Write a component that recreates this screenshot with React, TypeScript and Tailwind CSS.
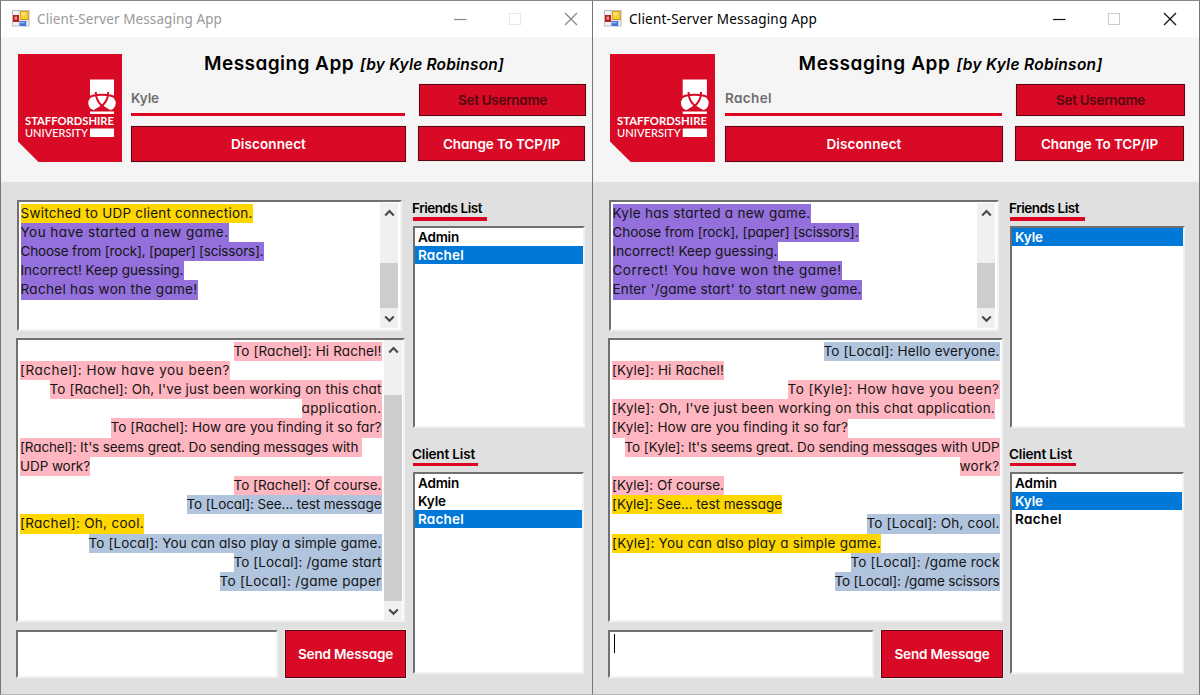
import { useLayoutEffect, useRef } from 'react';
import type { ReactNode } from 'react';
import clsx from 'clsx';

type FitProps = { text: string; width: number; className?: string };

/** One line of text whose tracking is adjusted so that it spans `width` pixels. */
function Fit({ text, width, className }: FitProps) {
  const ref = useRef<HTMLSpanElement>(null);
  useLayoutEffect(() => {
    const el = ref.current;
    if (!el) return;
    el.style.letterSpacing = '0px';
    const natural = el.getBoundingClientRect().width;
    el.style.letterSpacing = `${(width - natural) / text.length}px`;
  }, [text, width]);
  return (
    <span ref={ref} className={clsx('inline-block whitespace-pre', className)}>
      {text}
    </span>
  );
}

type Tone = 'gold' | 'purple' | 'pink' | 'blue';
const tones: Record<Tone, string> = {
  gold: 'bg-[#ffd700]',
  purple: 'bg-[#9370db]',
  pink: 'bg-[#ffb6c1]',
  blue: 'bg-[#b0c4de]',
};

type Line = { text: string; width: number; tone: Tone; right?: boolean };

function Lines({ lines, className }: { lines: Line[]; className: string }) {
  return (
    <div className={clsx('flex flex-col', className)}>
      {lines.map((l, i) => (
        <div key={i} className={clsx('flex h-[19.2px] shrink-0', l.right && 'justify-end')}>
          <Fit
            text={l.text}
            width={l.width}
            className={clsx('h-[19.3px] text-[13.5px] leading-[19px] text-[#151515]', tones[l.tone])}
          />
        </div>
      ))}
    </div>
  );
}

function Sunken({ className, children }: { className: string; children?: ReactNode }) {
  return (
    <div
      className={clsx(
        'shrink-0 border-2 border-t-[#707070] border-r-[#f2f2f2] border-b-[#f2f2f2] border-l-[#707070] bg-white',
        className,
      )}
    >
      {children}
    </div>
  );
}

function Chevron({ down }: { down?: boolean }) {
  return (
    <svg width="11" height="8" viewBox="0 0 11 8" fill="none" stroke="#484848" strokeWidth="2.1">
      <path d={down ? 'M1.2 1.4 5.5 5.8 9.8 1.4' : 'M1.2 6.4 5.5 2 9.8 6.4'} />
    </svg>
  );
}

function ScrollBar({ className, before, thumb }: { className: string; before: string; thumb: string }) {
  return (
    <div className={clsx('flex w-[18px] shrink-0 flex-col items-center bg-[#f0f0f0]', className)}>
      <div className={clsx('flex shrink-0 justify-center', before)}>
        <Chevron />
      </div>
      <div className={clsx('w-full shrink-0 bg-[#cdcdcd]', thumb)} />
      <div className="mt-[7px]">
        <Chevron down />
      </div>
    </div>
  );
}

function RedButton({ text, width, className, muted }: FitProps & { muted?: boolean }) {
  return (
    <button
      className={clsx(
        'flex shrink-0 items-center justify-center border border-[#5a0712] bg-[#d90a25] outline outline-[#ececec]',
        className,
      )}
    >
      <Fit
        text={text}
        width={width}
        className={clsx('text-[13.5px] leading-[18px] font-semibold', muted ? 'text-[#520813]' : 'text-white')}
      />
    </button>
  );
}

function AppIcon() {
  return (
    <svg width="18" height="17" viewBox="0 0 18 17">
      <rect x=".5" y=".5" width="16.5" height="15.5" fill="#f4f4f5" stroke="#b9bbc0" />
      <path d="M7 1v15M1 11h16" stroke="#c9cbd0" />
      <rect x="1" y="5" width="6" height="7" fill="#bd1c18" />
      <rect x="2.6" y="6.6" width="2.4" height="3" fill="#f0a090" />
      <rect x="8.2" y="1" width="8.6" height="9" fill="#d99a0b" />
      <rect x="9" y="1.7" width="6.8" height="7.2" fill="#f8cf3b" />
      <rect x="10" y="2.6" width="3" height="3" fill="#fde88a" />
      <rect x="7.6" y="11" width="6.6" height="5" fill="#3f74d8" />
      <rect x="8.4" y="11.8" width="4.4" height="1.6" fill="#8fb7f8" />
    </svg>
  );
}

function Logo({ className }: { className: string }) {
  return (
    <svg className={clsx('shrink-0', className)} viewBox="0 0 104 108" preserveAspectRatio="none">
      <path d="M0 0H104V108H20.500L0 87.500Z" fill="#d90a25" />
      <path d="M72 25.500H96V47H72Z" fill="#fff" />
      <ellipse cx="77.300" cy="49.300" rx="7" ry="7" fill="#fff" />
      <ellipse cx="90.700" cy="49.300" rx="7" ry="7" fill="#fff" />
      <path d="M78 42H90V49L84 55L78 49Z" fill="#fff" />
      <path
        d="M71 43.800C75 39.800 93 39.800 97 43.800M77.800 38C77.800 47.500 83.500 53 91.500 56.600M90.200 38C90.200 47.500 84.500 53 76.500 56.600"
        fill="none"
        stroke="#d90a25"
        strokeWidth="2"
      />
      <path d="M79 56.300 84 52.800 89 56.300Z" fill="#d90a25" />
      <path d="M72 57.500H96V60H72Z" fill="#fff" />
      <g fill="#fff" fontFamily="Lato, 'Open Sans', sans-serif" fontSize="11.600" fontWeight="700">
        <text x="7" y="71" textLength="89" lengthAdjust="spacingAndGlyphs">
          STAFFORDSHIRE
        </text>
        <text x="7" y="83" textLength="63" lengthAdjust="spacingAndGlyphs" fontWeight="500">
          UNIVERSITY
        </text>
      </g>
      <path d="M72 74.500H96V83H72Z" fill="#fff" />
    </svg>
  );
}

type Item = { text: string; width: number; selected?: boolean };
type ListProps = { title: string; titleWidth: number; underline: string; items: Item[]; box: string; pad: string };

function NameList({ title, titleWidth, underline, items, box, pad }: ListProps) {
  return (
    <section className="flex flex-col items-start">
      <Fit text={title} width={titleWidth} className="h-[17px] text-[13.5px] leading-[17px] font-semibold text-black" />
      <div className={clsx('ml-px h-[3.500px] bg-[#dc0420]', underline)} />
      <Sunken className={clsx('ml-px', box)}>
        {items.map((it) => (
          <div
            key={it.text}
            className={clsx('flex h-[18px] items-center', pad, it.selected ? 'bg-[#0078d7] text-white' : 'text-black')}
          >
            <Fit text={it.text} width={it.width} className="text-[13.5px] leading-[18px] font-semibold" />
          </div>
        ))}
      </Sunken>
    </section>
  );
}

type Sizes = {
  frame: string;
  titleBar: string;
  header: string;
  logo: string;
  headerMid: string;
  heading: string;
  rule: string;
  disconnect: string;
  headerRight: string;
  username: string;
  change: string;
  body: string;
  logBox: string;
  chatBox: string;
  chatLines: string;
  input: string;
  send: string;
  lists: string;
  friendsBox: string;
  clientBox: string;
  friendsRule: string;
  clientRule: string;
};

type WindowProps = {
  s: Sizes;
  active: boolean;
  user: string;
  userWidth: number;
  captionWidth: number;
  headingWidths: [number, number];
  log: Line[];
  chat: Line[];
  chatScrolls: boolean;
  friends: Item[];
  clients: Item[];
};

function MessagingWindow(p: WindowProps) {
  const { s } = p;
  return (
    <div className={clsx('flex h-[695px] shrink-0 flex-col border-t border-b border-l border-t-[#8a8a8a] border-b-[#b5b5b5] bg-[#e0e0e0]', s.frame)}>
      <div className={clsx('flex h-9 shrink-0 items-center justify-between bg-white', s.titleBar)}>
        <div className={clsx('flex items-center pb-px', p.active ? 'gap-[7px] text-black' : 'gap-[7px] text-[#999]')}>
          <AppIcon />
          <Fit text="Client-Server Messaging App" width={p.captionWidth} className="font-['Noto_Sans','Open_Sans',sans-serif] text-[13.5px] leading-5" />
        </div>
        <svg className="mb-px shrink-0" width="126" height="14" viewBox="0 0 126 14" fill="none" stroke={p.active ? '#111' : '#888'}>
          <path d="M1 7.500H13.500" strokeWidth="1.200" />
          <rect x="56.500" y="1.500" width="11" height="11" stroke={p.active ? '#ccc' : '#e6e6e6'} />
          <path d="M112 1 124 13M124 1 112 13" strokeWidth="1.300" />
        </svg>
      </div>

      <div className={clsx('flex h-[145px] shrink-0 bg-[#f5f5f5]', s.header)}>
        <Logo className={s.logo} />
        <div className={clsx('flex shrink-0 flex-col items-start', s.headerMid)}>
          <div className={clsx('flex h-[30px] items-baseline gap-[6px] whitespace-nowrap text-black', s.heading)}>
            <Fit text="Messaging App" width={p.headingWidths[0]} className="text-[19px] leading-[26px] font-semibold" />
            <Fit text="[by Kyle Robinson]" width={p.headingWidths[1]} className="text-[15.500px] leading-[26px] font-semibold italic" />
          </div>
          <Fit text={p.user} width={p.userWidth} className="mt-[8px] text-[13.500px] leading-[18px] font-semibold text-[#6d6d6d]" />
          <div className={clsx('mt-[5.500px] h-[3.500px] bg-[#dc0420]', s.rule)} />
          <RedButton text="Disconnect" width={75} className={clsx('mt-[10px] h-9', s.disconnect)} />
        </div>
        <div className={clsx('flex shrink-0 flex-col', s.headerRight)}>
          <RedButton text="Set Username" width={89} muted className={clsx('h-8', s.username)} />
          <RedButton text="Change To TCP/IP" width={117} className={clsx('mt-[10px] h-[35px]', s.change)} />
        </div>
      </div>

      <div className={clsx('flex grow', s.body)}>
        <div className="flex shrink-0 flex-col">
          <Sunken className={clsx('mt-[18px] ml-px flex h-[131px] justify-between', s.logBox)}>
            <Lines lines={p.log} className="mt-[1.700px] pl-[1.500px]" />
            <ScrollBar className="mt-[1px] mr-[2px] h-[125px]" before="h-[59.500px] pt-[6px]" thumb="h-[45px]" />
          </Sunken>
          <Sunken className={clsx('mt-[7px] flex h-[284px] overflow-hidden', s.chatBox)}>
            <Lines lines={p.chat} className={clsx('mt-[1.700px] grow pl-[2px]', s.chatLines)} />
            {p.chatScrolls && <ScrollBar className="mr-[1px] ml-[2.500px] h-[280px]" before="h-[54.500px] pt-[6px]" thumb="h-[206px]" />}
          </Sunken>
          <div className="mt-2 flex gap-[7px]">
            <Sunken className={clsx('h-12 pt-[2px] pl-[3.500px]', s.input)}>
              {p.active && <div className="h-[19px] w-[1.500px] bg-black" />}
            </Sunken>
            <RedButton text="Send Message" width={95} className={clsx('h-12', s.send)} />
          </div>
        </div>
        <div className={clsx('flex shrink-0 flex-col gap-[18px] pt-[18px]', s.lists)}>
          <NameList title="Friends List" titleWidth={70} underline={s.friendsRule} items={p.friends} box={clsx('mt-[5px] h-[202px]', s.friendsBox)} pad="pl-[3px]" />
          <NameList title="Client List" titleWidth={63} underline={s.clientRule} items={p.clients} box={clsx('mt-[6px] h-[202px]', s.clientBox)} pad="pl-[3px]" />
        </div>
      </div>
    </div>
  );
}

const leftSizes: Sizes = {
  frame: 'w-[592px] border-l-[#777]',
  titleBar: 'pl-[11px] pr-[13px]',
  header: 'pl-[17px]',
  logo: 'mt-[17px] h-[108px] w-[104px]',
  headerMid: 'ml-[9px] w-[275px] pt-[14px]',
  heading: 'pl-[73px]',
  rule: 'w-[274px]',
  disconnect: 'w-[275px]',
  headerRight: 'ml-[12px] pt-[47px]',
  username: 'ml-px w-[167px]',
  change: 'w-[167px]',
  body: 'pl-[15px]',
  logBox: 'w-[385px]',
  chatBox: 'w-[389px]',
  chatLines: '',
  input: 'w-[262px]',
  send: 'w-[121px]',
  lists: 'ml-[6px]',
  friendsBox: 'w-[172px]',
  clientBox: 'w-[171px]',
  friendsRule: 'w-[74px]',
  clientRule: 'w-[65px]',
};

const rightSizes: Sizes = {
  frame: 'w-[608px] border-r border-l-[#777] border-r-[#777]',
  titleBar: 'pl-[11px] pr-[21px]',
  header: 'pl-[17px]',
  logo: 'mt-[17px] h-[108px] w-[105px]',
  headerMid: 'ml-[10px] w-[278px] pt-[14px]',
  heading: 'pl-[73.500px]',
  rule: 'w-[277px]',
  disconnect: 'w-[278px]',
  headerRight: 'ml-[12px] pt-[47px]',
  username: 'ml-px w-[169px]',
  change: 'w-[169px]',
  body: 'pl-[15px]',
  logBox: 'w-[390px]',
  chatBox: 'w-[395px]',
  chatLines: 'pr-[1.500px]',
  input: 'w-[266px]',
  send: 'w-[122px]',
  lists: 'ml-[6px]',
  friendsBox: 'w-[175px]',
  clientBox: 'w-[174px]',
  friendsRule: 'w-[75px]',
  clientRule: 'w-[66px]',
};

const kyleLog: Line[] = [
  { text: 'Switched to UDP client connection.', width: 232, tone: 'gold' },
  { text: 'You have started a new game.', width: 208, tone: 'purple' },
  { text: 'Choose from [rock], [paper] [scissors].', width: 243, tone: 'purple' },
  { text: 'Incorrect! Keep guessing.', width: 163, tone: 'purple' },
  { text: 'Rachel has won the game!', width: 177, tone: 'purple' },
];

const kyleChat: Line[] = [
  { text: 'To [Rachel]: Hi Rachel!', width: 148, tone: 'pink', right: true },
  { text: '[Rachel]: How have you been?', width: 210, tone: 'pink' },
  { text: "To [Rachel]: Oh, I've just been working on this chat", width: 332, tone: 'pink', right: true },
  { text: 'application.', width: 80, tone: 'pink', right: true },
  { text: 'To [Rachel]: How are you finding it so far?', width: 271, tone: 'pink', right: true },
  { text: "[Rachel]: It's seems great. Do sending messages with ", width: 342, tone: 'pink' },
  { text: 'UDP work?', width: 70, tone: 'pink' },
  { text: 'To [Rachel]: Of course.', width: 148, tone: 'pink', right: true },
  { text: 'To [Local]: See... test message', width: 195, tone: 'blue', right: true },
  { text: '[Rachel]: Oh, cool.', width: 124, tone: 'gold' },
  { text: 'To [Local]: You can also play a simple game.', width: 293, tone: 'blue', right: true },
  { text: 'To [Local]: /game start', width: 148, tone: 'blue', right: true },
  { text: 'To [Local]: /game paper', width: 162, tone: 'blue', right: true },
];

const rachelLog: Line[] = [
  { text: 'Kyle has started a new game.', width: 198, tone: 'purple' },
  { text: 'Choose from [rock], [paper] [scissors].', width: 246, tone: 'purple' },
  { text: 'Incorrect! Keep guessing.', width: 165, tone: 'purple' },
  { text: 'Correct! You have won the game!', width: 229, tone: 'purple' },
  { text: "Enter '/game start' to start new game.", width: 249, tone: 'purple' },
];

const rachelChat: Line[] = [
  { text: 'To [Local]: Hello everyone.', width: 176, tone: 'blue', right: true },
  { text: '[Kyle]: Hi Rachel!', width: 112, tone: 'pink' },
  { text: 'To [Kyle]: How have you been?', width: 212, tone: 'pink', right: true },
  { text: "[Kyle]: Oh, I've just been working on this chat application.", width: 383, tone: 'pink' },
  { text: '[Kyle]: How are you finding it so far?', width: 236, tone: 'pink' },
  { text: "To [Kyle]: It's seems great. Do sending messages with UDP", width: 375, tone: 'pink', right: true },
  { text: 'work?', width: 40, tone: 'pink', right: true },
  { text: '[Kyle]: Of course.', width: 112, tone: 'pink' },
  { text: '[Kyle]: See... test message', width: 170, tone: 'gold' },
  { text: 'To [Local]: Oh, cool.', width: 133, tone: 'blue', right: true },
  { text: '[Kyle]: You can also play a simple game.', width: 269, tone: 'gold' },
  { text: 'To [Local]: /game rock', width: 149, tone: 'blue', right: true },
  { text: 'To [Local]: /game scissors', width: 165, tone: 'blue', right: true },
];

export default function App() {
  return (
    <div className="flex h-[695px] w-[1200px] overflow-hidden bg-[#e0e0e0] font-[Inter,'Liberation_Sans',sans-serif] [font-feature-settings:'cv11']">
      <MessagingWindow
        s={leftSizes}
        active={false}
        user="Kyle"
        userWidth={28}
        captionWidth={185}
        headingWidths={[150, 144]}
        log={kyleLog}
        chat={kyleChat}
        chatScrolls
        friends={[
          { text: 'Admin', width: 41 },
          { text: 'Rachel', width: 46, selected: true },
        ]}
        clients={[
          { text: 'Admin', width: 41 },
          { text: 'Kyle', width: 28 },
          { text: 'Rachel', width: 46, selected: true },
        ]}
      />
      <MessagingWindow
        s={rightSizes}
        active
        user="Rachel"
        userWidth={47}
        captionWidth={188}
        headingWidths={[152, 146]}
        log={rachelLog}
        chat={rachelChat}
        chatScrolls={false}
        friends={[{ text: 'Kyle', width: 28, selected: true }]}
        clients={[
          { text: 'Admin', width: 42 },
          { text: 'Kyle', width: 28, selected: true },
          { text: 'Rachel', width: 47 },
        ]}
      />
    </div>
  );
}
